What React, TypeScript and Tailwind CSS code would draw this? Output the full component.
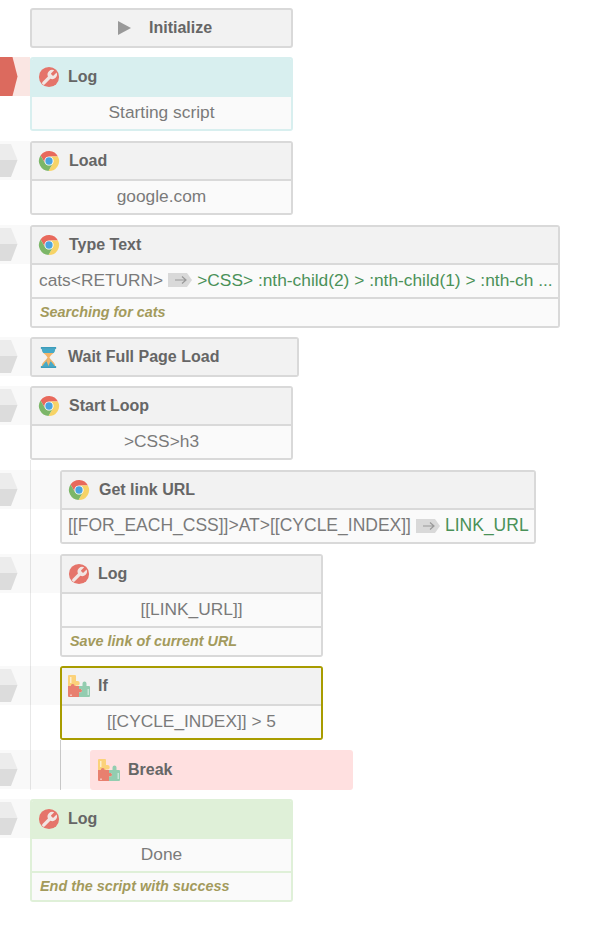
import React from 'react';

function ChromeIcon() {
  return (
    <svg viewBox="0 0 24 24" className="w-[22px] h-[22px] shrink-0">
      <circle cx="12" cy="12" r="11" fill="#fff" />
      <path d="M2.77 6.01A11 11 0 0 1 21.8 7H12A5 5 0 0 0 7.67 14.5Z" fill="#e8695c" />
      <path d="M21.8 7A11 11 0 0 1 11.43 22.99L16.33 14.5A5 5 0 0 0 12 7Z" fill="#f6d367" />
      <path d="M11.43 22.99A11 11 0 0 1 2.77 6.01L7.67 14.5A5 5 0 0 0 16.33 14.5Z" fill="#7cb668" />
      <circle cx="12" cy="12" r="4" fill="#4aa3df" />
    </svg>
  );
}

function WrenchIcon() {
  return (
    <svg viewBox="0 0 24 24" className="w-[22px] h-[22px] shrink-0">
      <circle cx="12" cy="12" r="11" fill="#e5746a" />
      <g transform="translate(1.800 2.400) scale(0.86)">
        <path
          d="M14.7 6.3a1 1 0 0 0 0 1.4l1.6 1.6a1 1 0 0 0 1.4 0l3.77-3.77a6 6 0 0 1-7.94 7.94l-6.91 6.91a2.12 2.12 0 0 1-3-3l6.91-6.91a6 6 0 0 1 7.94-7.94l-3.76 3.76z"
          fill="#f1e6e3"
        />
      </g>
    </svg>
  );
}

function HourglassIcon() {
  return (
    <svg viewBox="0 0 22 24" className="w-[21px] h-[23px] shrink-0">
      <path d="M4 3h14c0 4-4.500 6-6 9 1.500 3 6 5 6 9H4c0-4 4.500-6 6-9-1.500-3-6-5-6-9z" fill="#f2b56b" />
      <path d="M4 3h14c0 1.500-.5 3-1.500 4.200h-11C4.500 6 4 4.500 4 3z" fill="#45aac9" />
      <path d="M10 14 4.500 21H11zM12 14 17.500 21H11z" fill="#45aac9" />
      <path d="M11 12l2 4-2 5-2-5z" fill="#f2b56b" />
      <rect x="3" y="1" width="16" height="2" fill="#3b9dbc" />
      <rect x="3" y="21" width="16" height="2" fill="#3b9dbc" />
    </svg>
  );
}

function PuzzleIcon() {
  return (
    <svg viewBox="0 0 22 22" className="w-[22px] h-[22px] shrink-0">
      <path d="M0 1a1 1 0 0 1 1-1h6a1 1 0 0 1 1 1v5h1.500a2 2 0 0 1 0 4.500H8V13H0z" fill="#fbd27a" />
      <path d="M0 11h3V10a2 2 0 0 1 3.500 0v1H11v3h2a2 2 0 0 1 0 3.500h-2V22H1a1 1 0 0 1-1-1z" fill="#e8806f" />
      <path d="M11 11h3.500V8.500a2 2 0 0 1 4 0V11H21a1 1 0 0 1 1 1v9a1 1 0 0 1-1 1H11v-4.500h2a2 2 0 0 0 0-3.500h-2z" fill="#93cdb0" />
      <path d="M2 2h1.500v6H2z" fill="#fff" opacity="0.6" />
      <path d="M19.500 14H21v6h-1.500zM2 19.500h2V21H2z" fill="#fff" opacity="0.5" />
    </svg>
  );
}

function ArrowTag() {
  return (
    <svg viewBox="0 0 24 14" className="w-6 h-3.5 mx-[5px] shrink-0">
      <path d="M0 0h19l5 7-5 7H0z" fill="#d9d9d9" />
      <path d="M7 7h11M14 3.500 18 7l-4 3.500" fill="none" stroke="#999" strokeWidth="1.200" />
    </svg>
  );
}

function Gutter({ width, active }: { width: string; active?: boolean }) {
  return (
    <div className={`absolute right-full top-0 h-[39px] ${width} ${active ? 'bg-[#fae6e3]' : 'bg-black/[0.025]'}`}>
      <svg viewBox="0 0 18 39" className="absolute left-0 top-0 w-[18px] h-[39px]">
        {active ? (
          <path d="M0 0h12.500l5 19.500-5 19.500H0z" fill="#dc6a5e" />
        ) : (
          <>
            <path d="M0 3h11l6.500 16H0z" fill="#ececec" />
            <path d="M0 19h17.500L11 36H0z" fill="#dcdcdc" />
          </>
        )}
      </svg>
    </div>
  );
}

function Card({ icon, title, width, border, divider, head, gutter, active, body, note, titleGap }: any) {
  const line = border || 'border-[#d9d9d9]';
  const inner = divider || line;
  return (
    <div className={`relative ${width}`}>
      {gutter && <Gutter width={gutter} active={active} />}
      <div className={`border-2 rounded-[3px] overflow-hidden ${line}`}>
        <div className={`h-9 flex items-center pl-1.5 text-[16px] font-bold text-[#666] ${head || 'bg-[#f2f2f2]'}`}>
          {icon}
          <span className={titleGap || 'ml-[9px]'}>{title}</span>
        </div>
        {body && (
          <div className={`h-[34px] border-t-2 bg-[#fafafa] flex items-center pb-px text-[17.33px] text-[#7a7a7a] whitespace-nowrap ${inner}`}>
            {body}
          </div>
        )}
        {note && (
          <div className={`h-[29px] border-t-2 bg-[#fafafa] flex items-center pl-2 text-[14.4px] font-bold italic text-[#a39a5c] ${inner}`}>
            {note}
          </div>
        )}
      </div>
    </div>
  );
}

const centered = (text: string) => <span className="w-full text-center">{text}</span>;

export default function App() {
  return (
    <div className="min-h-[943px] bg-white pt-2 pl-[30px] font-['Liberation_Sans',Arial,sans-serif]">
      <div className="w-[263px] h-10 border-2 border-[#d9d9d9] rounded-[3px] bg-[#f2f2f2] flex items-center pl-[86px] text-[16px] font-bold text-[#666]">
        <svg viewBox="0 0 13 14" className="w-[13px] h-3.5 shrink-0">
          <path d="M0 0l13 7-13 7z" fill="#999" />
        </svg>
        <span className="ml-[18px]">Initialize</span>
      </div>

      <div className="mt-[9px]">
        <Card
          width="w-[263px]"
          gutter="w-[30px]"
          active
          border="border-[#d8efef]"
          head="bg-[#d8efef]"
          icon={<WrenchIcon />}
          title="Log"
          titleGap="ml-2"
          body={centered('Starting script')}
        />
      </div>

      <div className="mt-2.5">
        <Card width="w-[263px]" gutter="w-[30px]" icon={<ChromeIcon />} title="Load" body={centered('google.com')} />
      </div>

      <div className="mt-2.5">
        <Card
          width="w-[530px]"
          gutter="w-[30px]"
          icon={<ChromeIcon />}
          title="Type Text"
          note="Searching for cats"
          body={
            <span className="flex items-center pl-[7px]">
              cats&lt;RETURN&gt;
              <ArrowTag />
              <span className="text-[#4a9158]">&gt;CSS&gt; :nth-child(2) &gt; :nth-child(1) &gt; :nth-ch ...</span>
            </span>
          }
        />
      </div>

      <div className="mt-[9px]">
        <Card width="w-[269px]" gutter="w-[30px]" icon={<HourglassIcon />} title="Wait Full Page Load" />
      </div>

      <div className="mt-[9px]">
        <Card width="w-[263px]" gutter="w-[30px]" icon={<ChromeIcon />} title="Start Loop" body={centered('>CSS>h3')} />
      </div>

      {/* loop children */}
      <div className="border-l border-[#e8e8e8] pl-[29px] pt-2.5">
        <Card
          width="w-[476px]"
          gutter="w-[60px]"
          icon={<ChromeIcon />}
          title="Get link URL"
          body={
            <span className="flex items-center pl-1.5 text-[17.5px]">
              [[FOR_EACH_CSS]]&gt;AT&gt;[[CYCLE_INDEX]]
              <ArrowTag />
              <span className="text-[#4a9158]">LINK_URL</span>
            </span>
          }
        />
        <div className="mt-2.5">
          <Card
            width="w-[263px]"
            gutter="w-[60px]"
            icon={<WrenchIcon />}
            title="Log"
            titleGap="ml-2"
            body={centered('[[LINK_URL]]')}
            note="Save link of current URL"
          />
        </div>
        <div className="mt-[9px]">
          <Card
            width="w-[263px]"
            gutter="w-[60px]"
            border="border-[#a89c00]"
            divider="border-[#d9d9d9]"
            icon={<PuzzleIcon />}
            title="If"
            titleGap="ml-2"
            body={centered('[[CYCLE_INDEX]] > 5')}
          />
        </div>
        <div className="border-l border-[#cccccc] pl-[29px] pt-2.5">
          <div className="relative w-[263px] h-10 rounded-[3px] bg-[#ffe0e0] flex items-center pl-2 text-[16px] font-bold text-[#666]">
            <Gutter width="w-[90px]" />
            <PuzzleIcon />
            <span className="ml-2">Break</span>
          </div>
        </div>
      </div>

      <div className="mt-[9px]">
        <Card
          width="w-[263px]"
          gutter="w-[30px]"
          border="border-[#dff0d8]"
          head="bg-[#dff0d8]"
          icon={<WrenchIcon />}
          title="Log"
          titleGap="ml-2"
          body={centered('Done')}
          note="End the script with success"
        />
      </div>
    </div>
  );
}
